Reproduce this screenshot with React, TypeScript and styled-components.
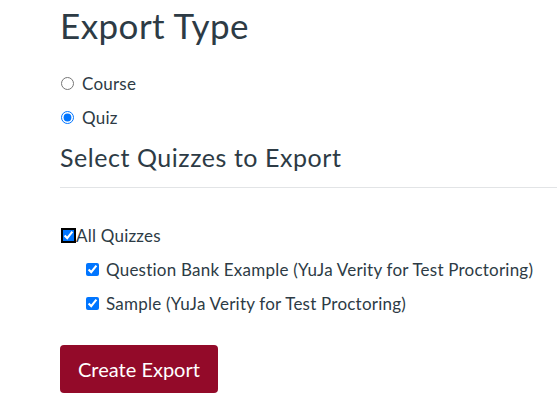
import { createGlobalStyle, styled } from 'styled-components'

const GlobalStyle = createGlobalStyle`
  body {
    margin: 0;
    background: #fff;
    color: #2d3b45;
    font-family: Lato, "Open Sans", sans-serif;
  }
`

const Page = styled.div`
  padding: 4px 0 0 60px;
`

const Title = styled.h1`
  margin: 0;
  font-size: 35px;
  font-weight: 400;
  line-height: 1.2;
  letter-spacing: 0.45px;
`

const RadioGroup = styled.div`
  margin-top: 20px;
`

const OptionRow = styled.label<{ indent?: number }>`
  display: flex;
  align-items: center;
  height: 34px;
  padding-left: ${props => props.indent || 0}px;
  font-size: 17px;
  letter-spacing: 0.22px;
  cursor: pointer;
`

const Radio = styled.input.attrs({ type: 'radio' })`
  width: 13px;
  height: 13px;
  margin: 0 8px 0 1px;
`

const Checkbox = styled.input.attrs({ type: 'checkbox' })<{ $tight?: boolean; $focused?: boolean }>`
  width: 13px;
  height: 13px;
  margin: ${props => (props.$tight ? '0 1px 0 2px' : '0 7px 0 0')};
  outline: ${props => (props.$focused ? '2px solid #000' : 'none')};
  outline-offset: -1px;
  border-radius: 2px;
`

const Subtitle = styled.h2`
  margin: 8px 0 0;
  font-size: 25px;
  font-weight: 400;
  line-height: 1.2;
  letter-spacing: 0.55px;
`

const Divider = styled.hr`
  margin: 15px 0 0;
  border: none;
  border-top: 1px solid #e2e4e6;
`

const CheckList = styled.div`
  margin-top: 30px;
`

const ExportButton = styled.button`
  margin-top: 25px;
  width: 158px;
  height: 48px;
  padding: 0;
  border: none;
  border-radius: 4px;
  background: #930a29;
  color: #fff;
  font-family: Lato, "Open Sans", sans-serif;
  font-size: 20px;
  cursor: pointer;
`

const quizzes = [
  'Question Bank Example (YuJa Verity for Test Proctoring)',
  'Sample (YuJa Verity for Test Proctoring)',
]

function App() {
  return (
    <>
      <GlobalStyle />
      <Page>
        <Title>Export Type</Title>
        <RadioGroup>
          <OptionRow>
            <Radio name='export-type' value='course' />
            Course
          </OptionRow>
          <OptionRow>
            <Radio name='export-type' value='quiz' defaultChecked />
            Quiz
          </OptionRow>
        </RadioGroup>
        <Subtitle>Select Quizzes to Export</Subtitle>
        <Divider />
        <CheckList>
          <OptionRow>
            <Checkbox $tight $focused defaultChecked />
            All Quizzes
          </OptionRow>
          {quizzes.map(q => (
            <OptionRow key={q} indent={26}>
              <Checkbox defaultChecked />
              {q}
            </OptionRow>
          ))}
        </CheckList>
        <ExportButton>Create Export</ExportButton>
      </Page>
    </>
  )
}

export default App
